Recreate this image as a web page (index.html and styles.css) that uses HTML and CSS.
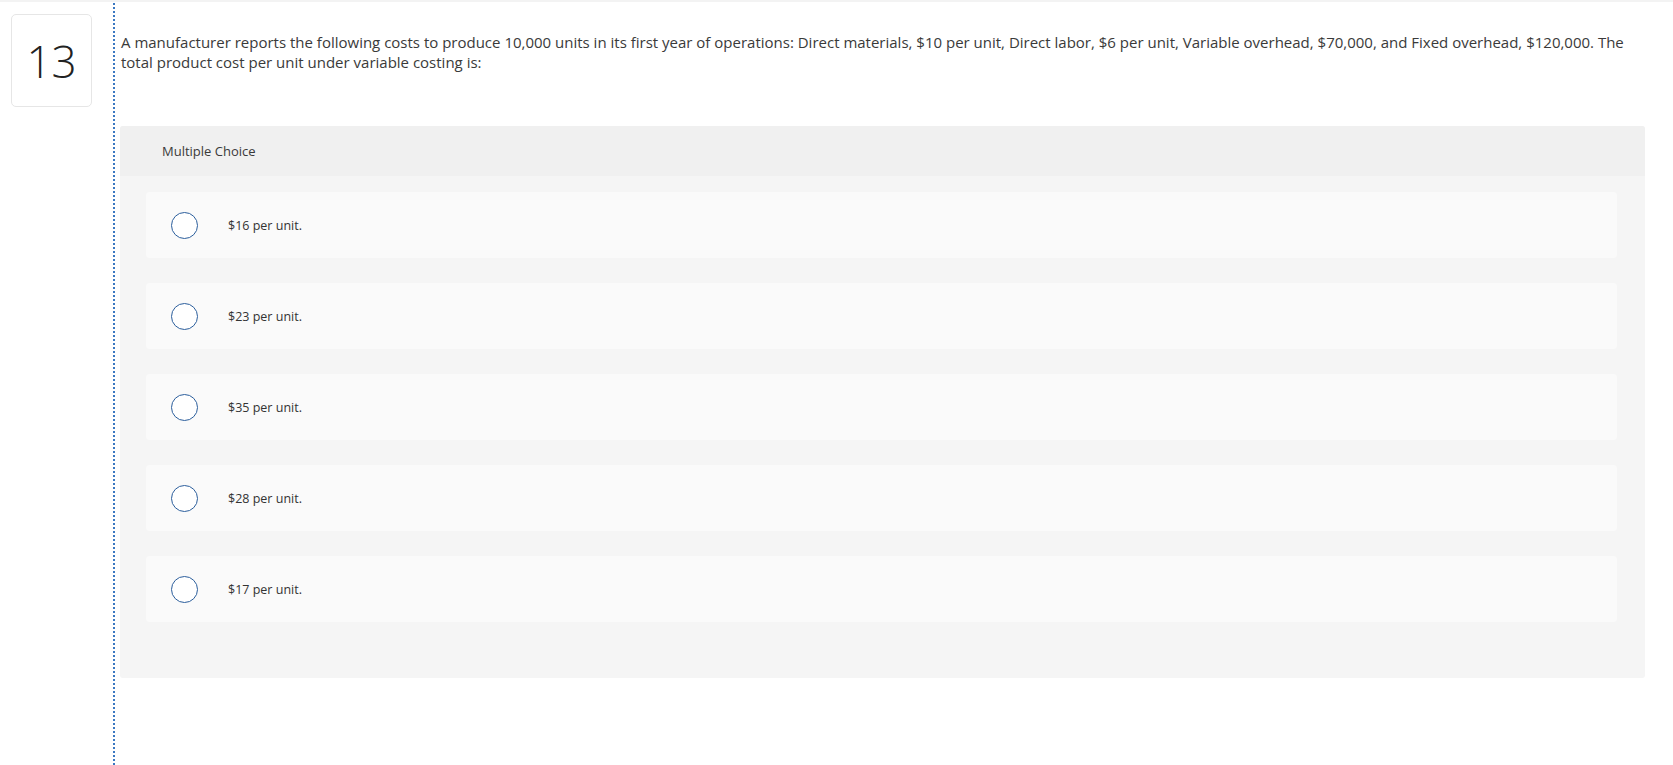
FILE: index.html
```html
<!DOCTYPE html>
<html>
<head>
<meta charset="utf-8">
<link rel="stylesheet" href="styles.css">
</head>
<body>
<div class="page">
  <div class="side">
    <div class="qnum">13</div>
  </div>
  <div class="main">
    <p class="question">A manufacturer reports the following costs to produce 10,000 units in its first year of operations: Direct materials, $10 per unit, Direct labor, $6 per unit, Variable overhead, $70,000, and Fixed overhead, $120,000. The total product cost per unit under variable costing is:</p>
    <div class="panel">
      <div class="panel-head">Multiple Choice</div>
      <div class="options">
        <div class="option"><span class="radio"></span><span class="label">$16 per unit.</span></div>
        <div class="option"><span class="radio"></span><span class="label">$23 per unit.</span></div>
        <div class="option"><span class="radio"></span><span class="label">$35 per unit.</span></div>
        <div class="option"><span class="radio"></span><span class="label">$28 per unit.</span></div>
        <div class="option"><span class="radio"></span><span class="label">$17 per unit.</span></div>
      </div>
    </div>
  </div>
</div>
</body>
</html>
```
FILE: styles.css
```css
html, body {
  margin: 0;
  padding: 0;
  background: #fff;
  height: 100%;
  overflow: hidden;
}
body {
  font-family: "Open Sans", "Liberation Sans", sans-serif;
  color: #333;
  border-top: 2px solid #f3f3f3;
  box-sizing: border-box;
}
.page {
  display: flex;
  height: 100%;
}
.side {
  width: 113px;
  flex: none;
}
.qnum {
  margin: 12px 0 0 11px;
  width: 79px;
  height: 91px;
  border: 1px solid #e6e6e6;
  border-radius: 5px;
  display: flex;
  align-items: center;
  justify-content: center;
  font-size: 44px;
  color: #222;
  font-weight: 300;
}
.main {
  flex: 1;
  border-left: 2px dotted #3a78c2;
  border-top: 2px dotted #3a78c2;
  margin-top: -2px;
  padding-top: 30px;
  min-width: 0;
}
.question {
  margin: 0 0 54px 6px;
  font-size: 15px;
  line-height: 20px;
  color: #3a3a3a;
  padding-right: 40px;
}
.panel {
  margin-left: 5px;
  margin-right: 28px;
  background: #f5f5f5;
  border-radius: 3px;
  padding-bottom: 56px;
}
.panel-head {
  height: 50px;
  background: #f0f0f0;
  border-radius: 3px 3px 0 0;
  display: flex;
  align-items: center;
  padding-left: 42px;
  font-size: 13px;
  color: #3a3a3a;
}
.options {
  display: flex;
  flex-direction: column;
  gap: 25px;
  padding: 16px 28px 0 26px;
}
.option {
  height: 66px;
  background: #fafafa;
  border-radius: 4px;
  display: flex;
  align-items: center;
  padding-left: 25px;
}
.radio {
  width: 25px;
  height: 25px;
  border: 1.5px solid #2b5e9c;
  border-radius: 50%;
  background: #fff;
  flex: none;
}
.label {
  margin-left: 30px;
  font-size: 12.5px;
  color: #333;
}
```
